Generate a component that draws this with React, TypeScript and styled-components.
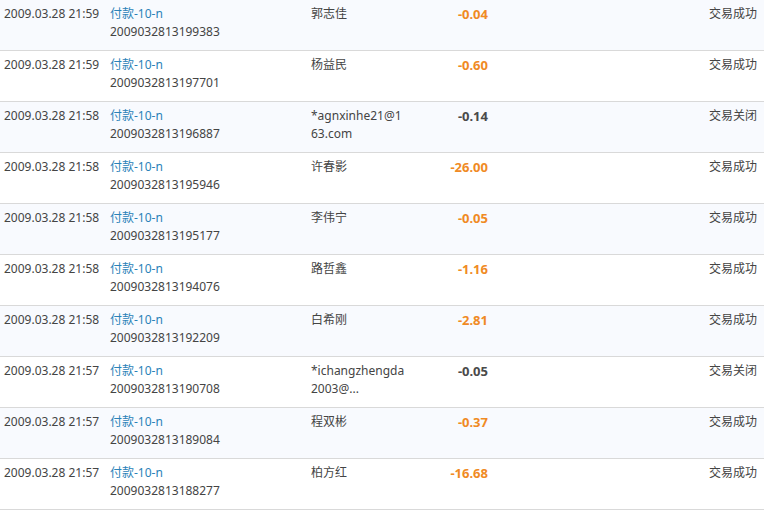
import styled, { createGlobalStyle } from "styled-components";

const GlobalStyle = createGlobalStyle`
  body {
    margin: 0;
    background: #fff;
    font-family: "Noto Sans", "Noto Sans CJK SC", sans-serif;
    font-size: 12px;
    color: #444;
  }
`;

const List = styled.div`
  width: 764px;
`;

const Row = styled.div<{ $alt: boolean }>`
  display: grid;
  grid-template-columns: 106px 201px 94px 83px 1fr;
  align-items: start;
  box-sizing: border-box;
  height: 51px;
  padding: 5px 7px 0 4px;
  line-height: 18px;
  background: ${(p) => (p.$alt ? "#f8fafe" : "#fff")};
  border-bottom: 1px solid #d9d9d9;
`;

const Cell = styled.div`
  white-space: nowrap;
`;

const Title = styled.div`
  color: #2a82b8;
`;

const Name = styled.div`
  word-break: break-all;
`;

const Amount = styled.div<{ $closed: boolean }>`
  text-align: right;
  font-weight: bold;
  font-size: 13px;
  color: ${(p) => (p.$closed ? "#4a4a4a" : "#f08a24")};
`;

const Status = styled.div`
  text-align: right;
`;

type Trade = {
  time: string;
  no: string;
  name: string;
  amount: string;
  status: string;
};

const trades: Trade[] = [
  { time: "2009.03.28 21:59", no: "2009032813199383", name: "郭志佳", amount: "-0.04", status: "交易成功" },
  { time: "2009.03.28 21:59", no: "2009032813197701", name: "杨益民", amount: "-0.60", status: "交易成功" },
  { time: "2009.03.28 21:58", no: "2009032813196887", name: "*agnxinhe21@163.com", amount: "-0.14", status: "交易关闭" },
  { time: "2009.03.28 21:58", no: "2009032813195946", name: "许春影", amount: "-26.00", status: "交易成功" },
  { time: "2009.03.28 21:58", no: "2009032813195177", name: "李伟宁", amount: "-0.05", status: "交易成功" },
  { time: "2009.03.28 21:58", no: "2009032813194076", name: "路哲鑫", amount: "-1.16", status: "交易成功" },
  { time: "2009.03.28 21:58", no: "2009032813192209", name: "白希刚", amount: "-2.81", status: "交易成功" },
  { time: "2009.03.28 21:57", no: "2009032813190708", name: "*ichangzhengda2003@...", amount: "-0.05", status: "交易关闭" },
  { time: "2009.03.28 21:57", no: "2009032813189084", name: "程双彬", amount: "-0.37", status: "交易成功" },
  { time: "2009.03.28 21:57", no: "2009032813188277", name: "柏方红", amount: "-16.68", status: "交易成功" },
];

const App: React.FC = () => (
  <>
    <GlobalStyle />
    <List>
      {trades.map((t, i) => (
        <Row key={t.no} $alt={i % 2 === 0}>
          <Cell>{t.time}</Cell>
          <Cell>
            <Title>付款-10-n</Title>
            <div>{t.no}</div>
          </Cell>
          <Name>{t.name}</Name>
          <Amount $closed={t.status === "交易关闭"}>{t.amount}</Amount>
          <Status>{t.status}</Status>
        </Row>
      ))}
    </List>
  </>
);

export default App;
